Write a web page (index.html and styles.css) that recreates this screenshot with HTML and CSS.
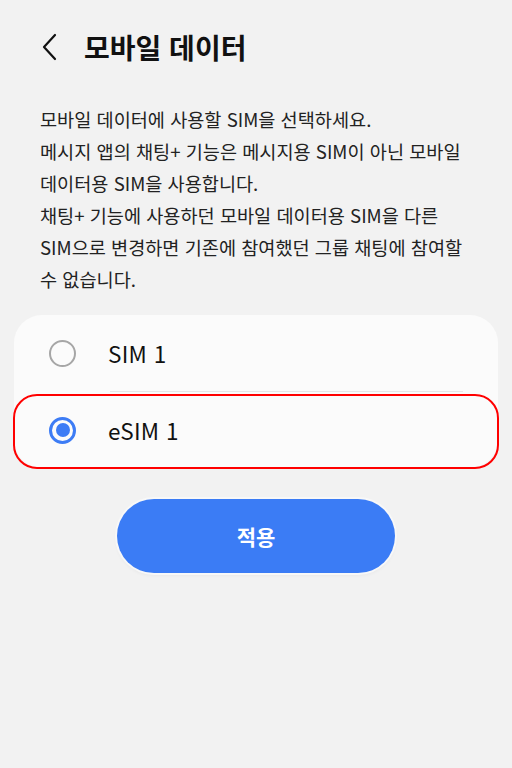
FILE: index.html
```html
<!DOCTYPE html>
<html lang="ko">
<head>
<meta charset="utf-8">
<title>모바일 데이터</title>
<link rel="stylesheet" href="styles.css">
</head>
<body>
<div class="screen">
  <header class="header">
    <svg class="back" width="16" height="28" viewBox="0 0 16 28" aria-hidden="true">
      <path d="M14 2 L3 14 L14 26" fill="none" stroke="#111" stroke-width="2.2" stroke-linecap="round" stroke-linejoin="round"/>
    </svg>
    <h1 class="title">모바일 데이터</h1>
  </header>
  <div class="desc">
    <p>모바일 데이터에 사용할 SIM을 선택하세요.</p>
    <p>메시지 앱의 채팅+ 기능은 메시지용 SIM이 아닌 모바일<br>데이터용 SIM을 사용합니다.</p>
    <p>채팅+ 기능에 사용하던 모바일 데이터용 SIM을 다른<br>SIM으로 변경하면 기존에 참여했던 그룹 채팅에 참여할<br>수 없습니다.</p>
  </div>
  <div class="card">
    <div class="row">
      <span class="radio"></span>
      <span class="label">SIM 1</span>
    </div>
    <div class="divider"></div>
    <div class="row">
      <span class="radio checked"></span>
      <span class="label">eSIM 1</span>
    </div>
    <div class="highlight"></div>
  </div>
  <div class="actions">
    <button class="apply">적용</button>
  </div>
</div>
</body>
</html>
```
FILE: styles.css
```css
html, body {
  margin: 0;
  padding: 0;
  background: #f2f2f2;
}
body {
  width: 512px;
  height: 768px;
  font-family: "Noto Sans CJK KR", "Noto Sans", sans-serif;
  color: #1a1a1a;
}
.screen {
  display: flex;
  flex-direction: column;
}
.header {
  display: flex;
  align-items: center;
  height: 50px;
  padding: 22px 0 0 41px;
}
.back {
  display: block;
  margin-right: 27px;
}
.title {
  margin: 0;
  font-size: 28px;
  font-weight: 700;
  letter-spacing: 0;
  color: #111;
}
.desc {
  margin-top: 31px;
  padding: 0 20px 0 40px;
  font-size: 18.6px;
  line-height: 32px;
  color: #222;
  letter-spacing: 0;
  white-space: nowrap;
}
.desc p {
  margin: 0;
}
.card {
  position: relative;
  margin: 20px 14px 0 14px;
  background: #fbfbfb;
  border-radius: 28px;
}
.row {
  display: flex;
  align-items: center;
  height: 76px;
  padding-left: 35px;
}
.radio {
  box-sizing: border-box;
  width: 27px;
  height: 27px;
  border-radius: 50%;
  border: 2px solid #a6a6a6;
  margin-right: 32px;
  display: flex;
  align-items: center;
  justify-content: center;
}
.radio.checked {
  border: 3px solid #3d7cf5;
}
.radio.checked::after {
  content: "";
  width: 14px;
  height: 14px;
  border-radius: 50%;
  background: #3d7cf5;
}
.label {
  font-size: 22.5px;
  color: #111;
  letter-spacing: 0.3px;
}
.divider {
  height: 1px;
  background: #e6e6e6;
  margin: 0 35px 0 96px;
}
.highlight {
  position: absolute;
  left: -1px;
  right: -1px;
  top: 79px;
  bottom: -1px;
  border: 2px solid #f00;
  border-radius: 24px;
}
.actions {
  display: flex;
  justify-content: center;
  margin-top: 31px;
}
.apply {
  width: 278px;
  height: 74px;
  border: none;
  border-radius: 37px;
  background: #3b7cf5;
  color: #fff;
  font-family: "Noto Sans CJK KR", "Noto Sans", sans-serif;
  font-size: 21px;
  font-weight: 700;
  box-shadow: 0 0 0 2px #f8f8f8, 0 2px 4px rgba(0,0,0,0.06);
}
```
